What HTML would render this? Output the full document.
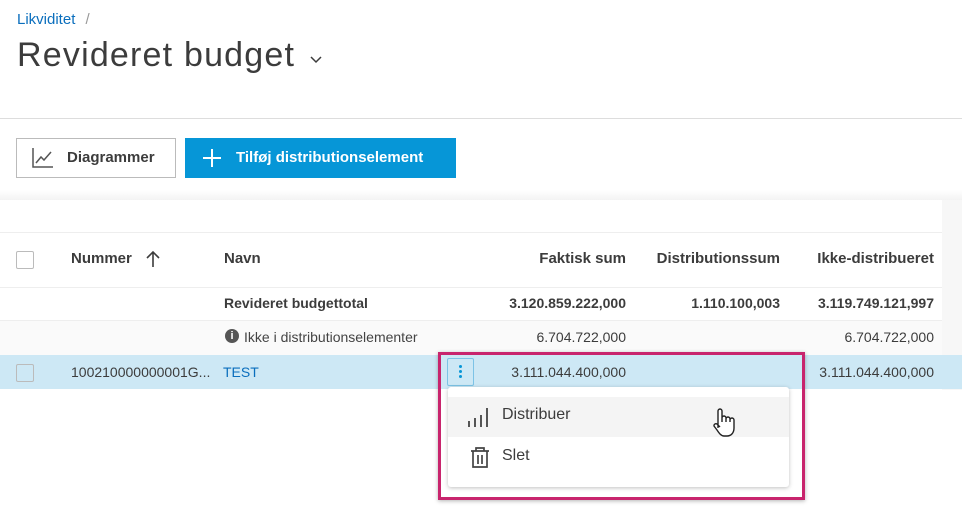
<!DOCTYPE html>
<html><head><meta charset="utf-8"><style>
*{margin:0;padding:0;box-sizing:border-box}
body{width:962px;height:510px;background:#fff;font-family:"Liberation Sans",sans-serif;color:#3c3c3c;position:relative;overflow:hidden}
.a{position:absolute;white-space:nowrap}
.r{text-align:right}
.t{font-size:14px}
.b{font-weight:bold;color:#3c3c3c}
.cb{position:absolute;width:18px;height:18px;border:1px solid #bbb;border-radius:2px;background:#fff}
</style></head><body>
<div class="a" style="left:17px;top:11px;font-size:15px;color:#0a6ebd">Likviditet <span style="color:#999;margin-left:6px">/</span></div>
<div class="a" style="left:17px;top:36px;font-size:34px;letter-spacing:1.2px;color:#3c3c3c">Revideret budget</div>
<svg class="a" style="left:309px;top:55px" width="14" height="10"><path d="M2 2l5 5 5-5" fill="none" stroke="#3c3c3c" stroke-width="1.5"/></svg>
<div class="a" style="left:0;top:118px;width:962px;height:1px;background:#ddd"></div>
<div class="a" style="left:16px;top:138px;width:160px;height:40px;border:1px solid #bbb;background:#fff"></div>
<svg class="a" style="left:31px;top:146px" width="24" height="24"><path d="M2 2v19h20M5 17l5-6 3 3 7-8" fill="none" stroke="#555" stroke-width="1.5"/></svg>
<div class="a" style="left:67px;top:149px;font-size:15px;font-weight:bold;color:#3c3c3c">Diagrammer</div>
<div class="a" style="left:185px;top:138px;width:271px;height:40px;background:#0696d7"></div>
<svg class="a" style="left:202px;top:148px" width="20" height="20"><path d="M10 1v18M1 10h18" stroke="#fff" stroke-width="2"/></svg>
<div class="a" style="left:236px;top:149px;font-size:15px;font-weight:bold;color:#fff">Tilføj distributionselement</div>
<div class="a" style="left:0;top:190px;width:962px;height:10px;background:linear-gradient(#fff,#f3f3f3)"></div>
<div class="a" style="left:942px;top:200px;width:20px;height:190px;background:#f7f7f7"></div>
<div class="a" style="left:0;top:232px;width:942px;height:1px;background:#eee"></div>
<div class="a" style="left:0;top:287px;width:942px;height:1px;background:#eee"></div>
<div class="a" style="left:0;top:320px;width:942px;height:1px;background:#eee"></div>
<div class="a" style="left:0;top:321px;width:942px;height:34px;background:#fafafa"></div>
<div class="a" style="left:0;top:355px;width:962px;height:34px;background:#cde8f5"></div>
<div class="cb" style="left:16px;top:251px"></div>
<div class="a t b" style="left:71px;top:250px;font-size:15px">Nummer</div>
<svg class="a" style="left:145px;top:250px" width="16" height="18"><path d="M8 2v15M2 8l6-6 6 6" fill="none" stroke="#3c3c3c" stroke-width="1.6"/></svg>
<div class="a t b" style="left:224px;top:250px;font-size:15px">Navn</div>
<div class="a t b r" style="right:336px;top:250px;font-size:15px">Faktisk sum</div>
<div class="a t b r" style="right:182px;top:250px;font-size:15px">Distributionssum</div>
<div class="a t b r" style="right:28px;top:250px;font-size:15px">Ikke-distribueret</div>
<div class="a t b" style="left:224px;top:295px">Revideret budgettotal</div>
<div class="a t b r" style="right:336px;top:295px">3.120.859.222,000</div>
<div class="a t b r" style="right:182px;top:295px">1.110.100,003</div>
<div class="a t b r" style="right:28px;top:295px">3.119.749.121,997</div>
<div class="a" style="left:225px;top:329px;width:14px;height:14px;border-radius:50%;background:#555;color:#fff;font-size:11px;font-weight:bold;text-align:center;line-height:14px">i</div>
<div class="a t" style="left:244px;top:329px;color:#444">Ikke i distributionselementer</div>
<div class="a t r" style="right:336px;top:329px">6.704.722,000</div>
<div class="a t r" style="right:28px;top:329px">6.704.722,000</div>
<div class="cb" style="left:16px;top:364px;background:#cde8f5"></div>
<div class="a t" style="left:71px;top:364px">100210000000001G...</div>
<div class="a t" style="left:223px;top:364px;color:#0a6ebd">TEST</div>
<div class="a" style="left:447px;top:358px;width:27px;height:28px;border:1px solid #7cc3e6;border-radius:2px;background:#cde8f5"></div>
<div class="a" style="left:459px;top:365px;width:3px;height:3px;background:#0696d7;border-radius:50%;box-shadow:0 5px 0 #0696d7,0 10px 0 #0696d7"></div>
<div class="a t r" style="right:336px;top:364px">3.111.044.400,000</div>
<div class="a t r" style="right:28px;top:364px">3.111.044.400,000</div>
<div class="a" style="left:448px;top:387px;width:341px;height:100px;background:#fff;border-radius:3px;box-shadow:0 1px 4px rgba(0,0,0,.25)"></div>
<div class="a" style="left:448px;top:397px;width:341px;height:40px;background:#f4f4f4"></div>
<svg class="a" style="left:467px;top:405px" width="24" height="24"><path d="M2 22v-6M8 22v-9M14 22v-12M20 22V3" stroke="#444" stroke-width="1.8"/></svg>
<div class="a" style="left:502px;top:406px;font-size:16px;color:#3c3c3c">Distribuer</div>
<svg class="a" style="left:469px;top:446px" width="22" height="24"><path d="M2 5h18M7 5V2h8v3M4 5v16h14V5M9 9v9M13 9v9" fill="none" stroke="#444" stroke-width="1.7"/></svg>
<div class="a" style="left:502px;top:447px;font-size:16px;color:#3c3c3c">Slet</div>
<svg class="a" style="left:711px;top:406px" width="24" height="34"><path d="M7 22V5a2 2 0 014 0v11V12a2 2 0 014 0v4-3a2 2 0 014 0v3-2a2 2 0 014 0v8c0 5-3 8-7 8h-3c-3 0-5-3-7-6l-3-4a2 2 0 013-2l3 3" fill="#fff" stroke="#222" stroke-width="1.4"/></svg>
<div class="a" style="left:438px;top:352px;width:367px;height:148px;border:3px solid #c8246d;box-shadow:0 1px 4px rgba(0,0,0,.3)"></div>
</body></html>
